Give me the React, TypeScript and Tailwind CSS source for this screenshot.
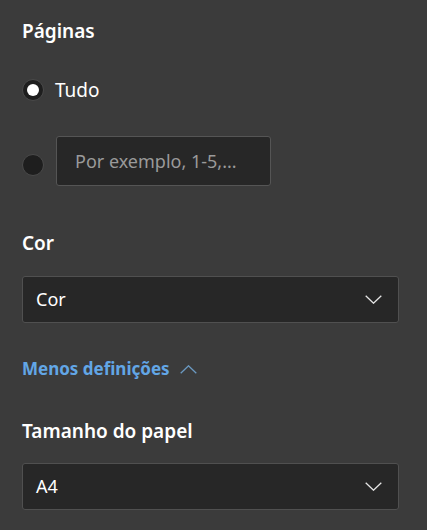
import React from "react";

function Chevron({ up = false, className = "" }: { up?: boolean; className?: string }) {
  return (
    <svg width="17" height="9" viewBox="0 0 17 9" fill="none" className={className}>
      <path
        d={up ? "M0.7 8.3 L8.5 0.8 L16.3 8.3" : "M0.7 0.7 L8.5 8.2 L16.3 0.7"}
        stroke="currentColor"
        strokeWidth="1.3"
      />
    </svg>
  );
}

function Radio({ checked }: { checked?: boolean }) {
  return (
    <span className="flex h-[22px] w-[22px] shrink-0 items-center justify-center rounded-full border border-[#4a4a4a] bg-[#1e1e1e]">
      {checked && <span className="h-[12px] w-[12px] rounded-full bg-white" />}
    </span>
  );
}

function Select({ value }: { value: string }) {
  return (
    <div className="flex h-[47px] items-center justify-between rounded-[3px] border border-[#505050] bg-[#272727] pl-[13px] pr-[16px]">
      <span className="text-[18px] text-white">{value}</span>
      <Chevron className="text-[#e6e6e6]" />
    </div>
  );
}

export default function App() {
  return (
    <div
      className="min-h-[530px] w-[427px] bg-[#3b3b3b] pl-[22px] pr-[28px] pt-[18px] text-white"
      style={{ fontFamily: '"Noto Sans", "Open Sans", sans-serif' }}
    >
      <h2 className="text-[19px] font-semibold leading-[26px]">Páginas</h2>

      <label className="mt-[33px] flex h-[26px] items-center gap-[11px]">
        <Radio checked />
        <span className="text-[19px] leading-[26px]">Tudo</span>
      </label>

      <div className="mt-[33px] flex items-start gap-[12px]">
        <span className="mt-[18px]">
          <Radio />
        </span>
        <div className="flex h-[50px] w-[215px] items-center rounded-[3px] border border-[#555] bg-[#272727] px-[18px]">
          <span className="text-[18px] text-[#9a9a9a]">Por exemplo, 1-5,...</span>
        </div>
      </div>

      <h2 className="mt-[44px] text-[19px] font-semibold leading-[26px]">Cor</h2>
      <div className="mt-[20px]">
        <Select value="Cor" />
      </div>

      <button className="mt-[35px] flex h-[22px] items-center gap-[10px] text-[17px] font-bold text-[#62a6e6]">
        Menos definições
        <Chevron up className="text-[#6b9ac2]" />
      </button>

      <h2 className="mt-[38px] text-[19px] font-semibold leading-[26px]">Tamanho do papel</h2>
      <div className="mt-[19px]">
        <Select value="A4" />
      </div>
    </div>
  );
}
